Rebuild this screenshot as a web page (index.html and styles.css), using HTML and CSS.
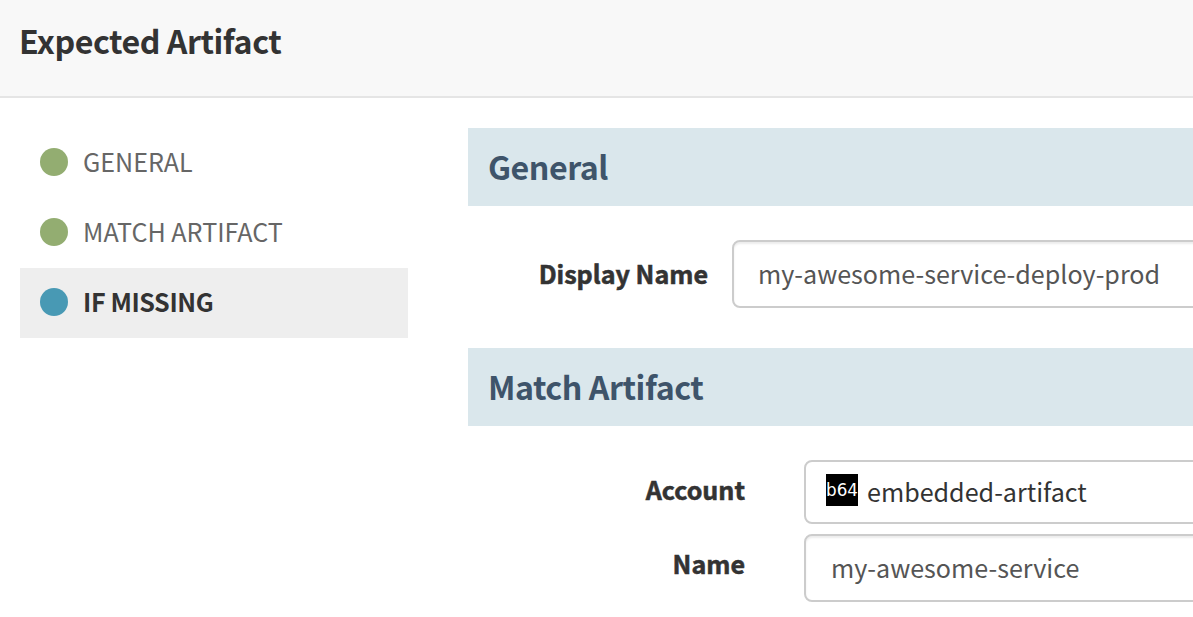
FILE: index.html
```html
<!DOCTYPE html>
<html lang="en">
<head>
<meta charset="utf-8">
<title>Expected Artifact</title>
<link rel="stylesheet" href="styles.css">
</head>
<body>
<header class="modal-header"><h1 class="modal-title">Expected Artifact</h1></header>
<div class="modal-body">
  <nav class="steps">
    <a class="step"><span class="dot"></span><span class="step-label">GENERAL</span></a>
    <a class="step"><span class="dot"></span><span class="step-label">MATCH ARTIFACT</span></a>
    <a class="step active"><span class="dot"></span><span class="step-label">IF MISSING</span></a>
  </nav>
  <main class="sections">
    <h2 class="section-heading">General</h2>
    <div class="row row-display">
      <label class="field-label">Display Name</label>
      <div class="input">my-awesome-service-deploy-prod</div>
    </div>
    <h2 class="section-heading">Match Artifact</h2>
    <div class="row row-account">
      <label class="field-label">Account</label>
      <div class="input select"><svg class="b64" viewBox="0 0 32 32"><rect width="32" height="32"/><text x="0" y="22" textLength="32" lengthAdjust="spacingAndGlyphs">b64</text></svg><span class="select-value">embedded-artifact</span></div>
    </div>
    <div class="row row-name">
      <label class="field-label">Name</label>
      <div class="input input-name">my-awesome-service</div>
    </div>
  </main>
</div>
</body>
</html>
```
FILE: styles.css
```css
* { box-sizing: border-box; }
body { margin: 0; height: 617px; overflow: hidden; background: #fff; color: #333; font: 25.1px/36px "Noto Sans CJK SC", "Noto Sans", sans-serif; white-space: nowrap; }
h1, h2 { margin: 0; font-size: 32.2px; font-weight: 700; line-height: 50px; letter-spacing: -0.48px; }
.modal-header { height: 98px; padding: 15px 19px 0; background: #f8f8f8; border-bottom: 2px solid #e5e5e5; }
.modal-body { display: flex; padding: 30px 0 0 20px; gap: 60px; }
.steps { width: 388px; flex: none; }
.step { display: flex; align-items: center; height: 70px; padding: 0 0 2px 20px; gap: 15px; color: #666; }
.step-label { padding-bottom: 2px; }
.dot { width: 28px; height: 28px; border-radius: 50%; background: #93ad71; }
.step.active { background: #eee; color: #333; font-weight: 700; letter-spacing: -0.4px; }
.active .dot { background: #4899b4; }
.sections { flex: 1; min-width: 0; overflow: hidden; }
.section-heading { height: 78px; padding: 13px 20px; background: #dae7ec; color: #3e546a; }
.row { display: flex; align-items: center; margin-right: -10px; }
.row-display { height: 142px; padding-bottom: 6px; gap: 24px; }
.field-label { width: 240px; padding-bottom: 2px; text-align: right; font-weight: 700; -webkit-text-stroke: 0.55px currentColor; }
.input { flex: 1; height: 68px; display: flex; align-items: center; padding: 0 0 2px 24px; border: 2px solid #ccc; border-radius: 8px; background: #fff; box-shadow: inset 0 2px 2px rgba(0,0,0,.075); color: #555; }
.row-account { margin-top: 34px; height: 64px; gap: 59px; }
.row-name { margin-top: 10px; height: 68px; gap: 59px; }
.row-account .field-label, .row-name .field-label { width: 277px; }
.row-account .field-label { padding-bottom: 6px; }
.row-name .field-label { padding-bottom: 10px; }
.input-name { padding-left: 25px; }
.select { height: 64px; padding: 0 0 0 20px; gap: 9px; color: #333; box-shadow: none; }
.select-value { padding-bottom: 2px; }
.b64 { width: 32px; height: 32px; margin-bottom: 4px; }
.b64 text { fill: #fff; font: 17px "DejaVu Sans", sans-serif; }
```
